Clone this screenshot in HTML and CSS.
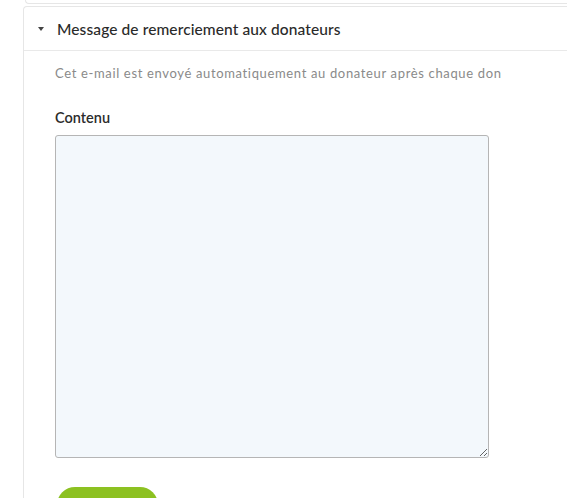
FILE: index.html
```html
<!DOCTYPE html>
<html lang="fr">
<head>
<meta charset="utf-8">
<link rel="stylesheet" href="styles.css">
</head>
<body>
<div class="page">
  <div class="card card-prev"></div>
  <section class="card">
    <header class="card-head">
      <span class="caret"></span>
      <h2 class="card-title">Message de remerciement aux donateurs</h2>
    </header>
    <div class="card-body">
      <p class="hint">Cet e-mail est envoyé automatiquement au donateur après chaque don</p>
      <label class="field-label" for="contenu">Contenu</label>
      <textarea id="contenu" class="field-area"></textarea>
      <button class="btn-save" type="button">Enregistrer</button>
    </div>
  </section>
</div>
</body>
</html>
```
FILE: styles.css
```css
html, body {
  margin: 0;
  padding: 0;
  background: #fff;
  overflow: hidden;
}
body {
  font-family: Lato, "Noto Sans", sans-serif;
  color: #333;
}
.page {
  padding-left: 23px;
  margin-top: -20px;
}
.card {
  border: 1px solid #e6e6e6;
  border-right: none;
  border-radius: 4px 0 0 4px;
  background: #fff;
}
.card-prev {
  height: 22px;
  margin-bottom: 2px;
  margin-left: 2px;
}
.card-head {
  display: flex;
  align-items: center;
  height: 43px;
  padding-left: 14px;
  border-bottom: 1px solid #e9e9e9;
}
.caret {
  width: 0;
  height: 0;
  border-left: 3.5px solid transparent;
  border-right: 3.5px solid transparent;
  border-top: 4px solid #444;
  margin-right: 13px;
}
.card-title {
  margin: 0;
  font-size: 15.5px;
  font-weight: 500;
  color: #2a2a2a;
  letter-spacing: 0.1px;
}
.card-body {
  padding: 13px 0 0 31px;
  display: flex;
  flex-direction: column;
  align-items: flex-start;
}
.hint {
  margin: 0;
  font-size: 13px;
  color: #8a8a8a;
  line-height: 18px;
  letter-spacing: 0.65px;
}
.field-label {
  margin-top: 27px;
  font-size: 14.5px;
  font-weight: 600;
  color: #2c2c2c;
  line-height: 18px;
}
.field-area {
  margin-top: 8px;
  width: 434px;
  height: 323px;
  box-sizing: border-box;
  background: #f3f8fc;
  border: 1px solid #b5b5b5;
  border-radius: 3px;
  resize: both;
}
.btn-save {
  margin-top: 29px;
  margin-left: 2px;
  width: 101px;
  height: 40px;
  border: none;
  border-radius: 18px;
  background: #8cc121;
  color: #fff;
  font-family: inherit;
  font-size: 14px;
  font-weight: 700;
}
```
